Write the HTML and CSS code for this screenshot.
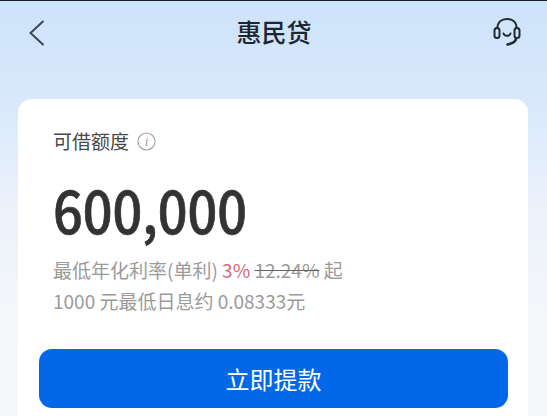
FILE: index.html
```html
<!DOCTYPE html>
<html lang="zh-CN">
<head>
<meta charset="utf-8">
<title>惠民贷</title>
<link rel="stylesheet" href="styles.css">
</head>
<body>
<div class="page">
  <header class="nav">
    <svg class="nav-back" width="18" height="28" viewBox="0 0 18 28"><path d="M15.5 2 L2.5 14 L15.5 26" fill="none" stroke="#3a4753" stroke-width="2"/></svg>
    <h1 class="nav-title">惠民贷</h1>
    <svg class="nav-service" width="30" height="30" viewBox="0 0 30 30" fill="none" stroke="#1f2a33" stroke-width="2" stroke-linecap="round">
      <path d="M5.5 11 C5.5 5 9.5 2 15 2 C20.5 2 24.5 5 24.5 11"/>
      <rect x="2.5" y="11" width="5" height="10" rx="2.5"/>
      <rect x="22.5" y="11" width="5" height="10" rx="2.5"/>
      <path d="M11.5 16.5 C12.5 19.5 17.5 19.5 18.5 16.5"/>
      <path d="M24 22 C23.5 25 20 26.5 15.5 27.5" stroke-width="2.6"/>
    </svg>
  </header>
  <main class="card">
    <div class="card-body">
      <div class="limit-label">
        <span>可借额度</span>
        <svg class="info" width="19" height="19" viewBox="0 0 19 19"><circle cx="9.5" cy="9.5" r="8.5" fill="none" stroke="#a0a0a0" stroke-width="1.1"/><text x="9.5" y="14" text-anchor="middle" class="info-i">i</text></svg>
      </div>
      <div class="amount"><span class="amount-value">600,000</span></div>
      <p class="rate">最低年化利率(单利) <span class="rate-hot">3%</span> <s class="rate-old">12.24%</s> 起</p>
      <p class="rate rate-second">1000 元最低日息约 0.08333元</p>
    </div>
    <button class="cta">立即提款</button>
  </main>
</div>
</body>
</html>
```
FILE: styles.css
```css
* { box-sizing: border-box; }
html, body { margin: 0; height: 100%; }
body {
  font-family: "Noto Sans CJK SC", "Noto Sans", sans-serif;
  overflow: hidden;
}
.page {
  height: 416px;
  border-top: 1px solid #1a2026;
  background: linear-gradient(180deg, #cde3fa 0%, #d9e9fb 25%, #ecf2fb 50%, #f4f6fa 75%, #f6f7f9 100%);
  padding: 0 19px 0 18px;
  overflow: hidden;
}
.nav {
  height: 98px;
  margin: 0 -19px 0 -18px;
  padding: 15px 25px 0 26px;
  display: grid;
  grid-template-columns: 1fr auto 1fr;
  align-items: start;
}
.nav-back { margin: 3px 0 0 2px; }
.nav-title {
  margin: 0;
  font-size: 25px;
  font-weight: 500;
  line-height: 30px;
  color: #1c2731;
}
.nav-service { justify-self: end; margin-top: 1px; }
.card {
  background: #fff;
  border-radius: 14px 14px 0 0;
  padding: 0 20px 0 21px;
  height: 340px;
}
.card-body { padding: 0 14px; }
.limit-label {
  padding-top: 28px;
  display: flex;
  align-items: center;
  gap: 8px;
  font-size: 19px;
  line-height: 28px;
  color: #484848;
}
.info-i {
  font-family: "Liberation Serif", serif;
  font-style: italic;
  font-size: 13px;
  fill: #999;
}
.amount {
  margin-top: 18px;
  font-size: 58px;
  font-weight: 500;
  -webkit-text-stroke: 0.7px #333;
  line-height: 72px;
  color: #333;
}
.amount-value {
  display: inline-block;
  transform: scaleX(0.9);
  transform-origin: left center;
}
.rate {
  margin: 9px 0 0;
  font-size: 19px;
  line-height: 31px;
  color: #9a9a9a;
}
.rate-second { margin-top: 0; }
.rate-hot { color: #d9646f; }
.rate-old { text-decoration-color: #666; }
.cta {
  display: block;
  width: 100%;
  height: 59px;
  margin-top: 33px;
  border: 0;
  border-radius: 13px;
  background: #0268e8;
  color: #fff;
  font-family: inherit;
  font-size: 24px;
}
```
